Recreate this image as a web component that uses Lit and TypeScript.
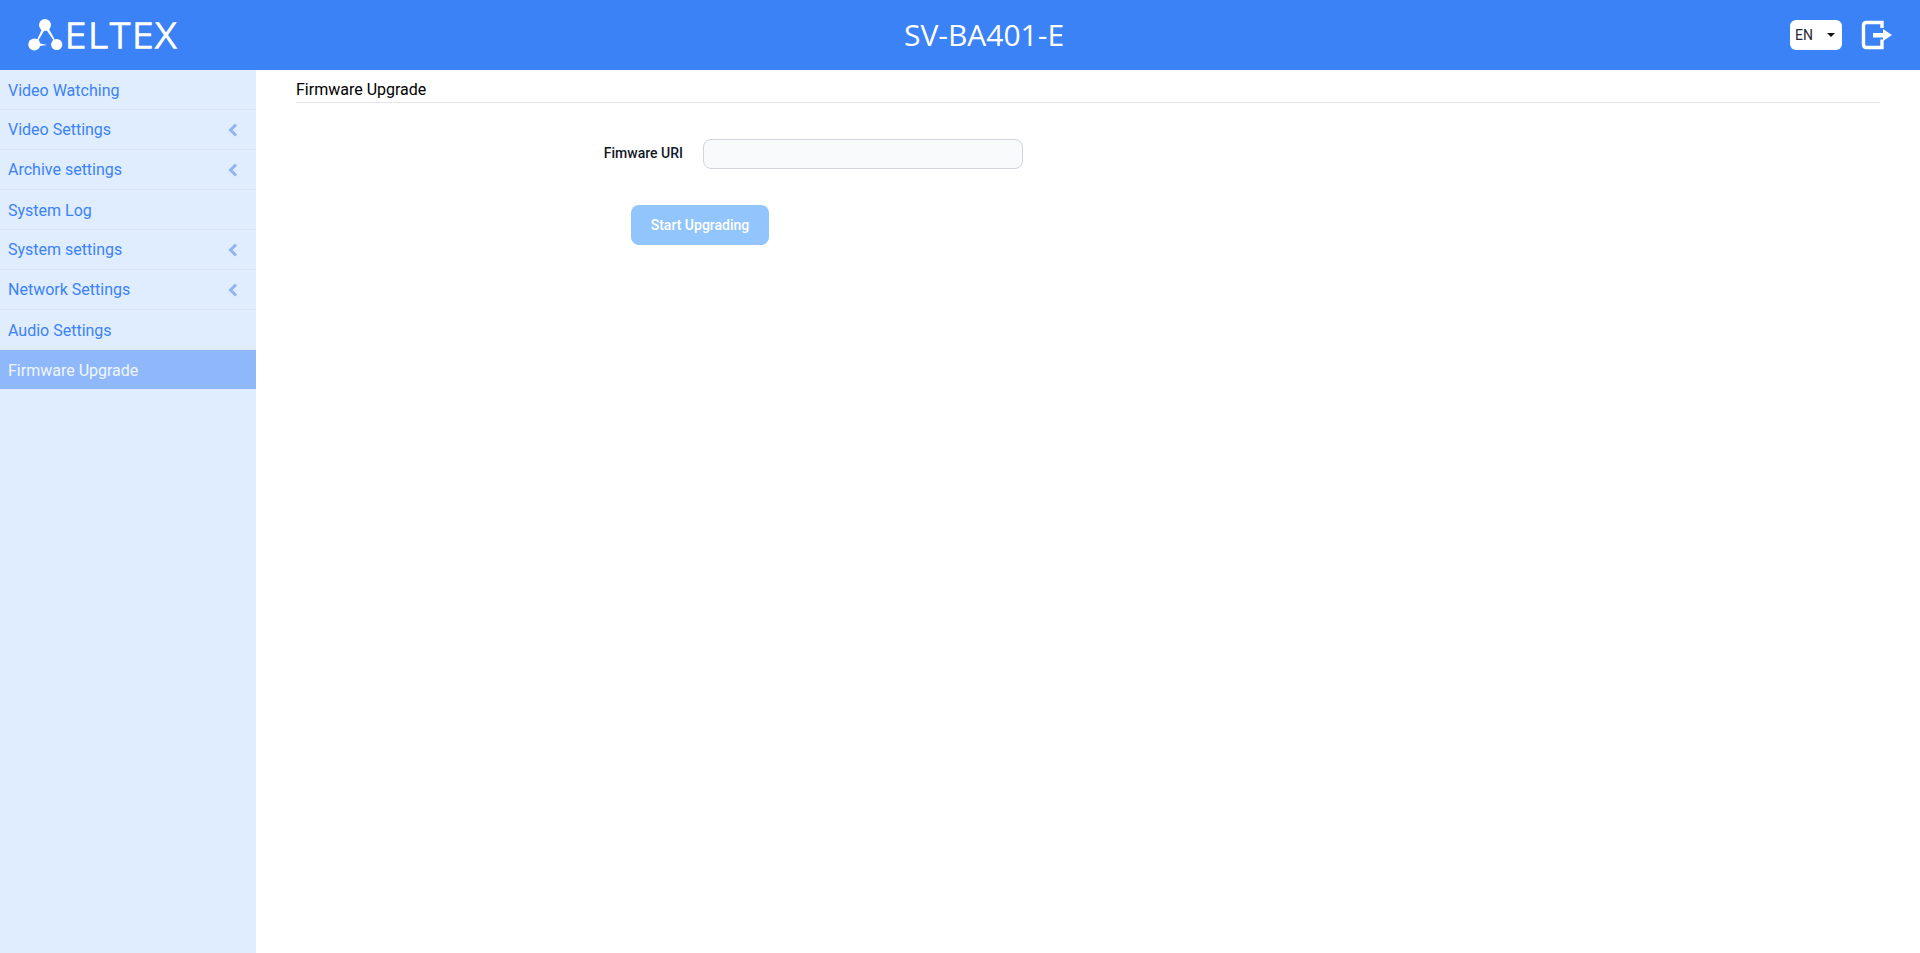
import { LitElement, html, css, svg } from "lit";
import { customElement } from "lit/decorators.js";

const items: [string, boolean, boolean][] = [
  ["Video Watching", false, false],
  ["Video Settings", true, false],
  ["Archive settings", true, false],
  ["System Log", false, false],
  ["System settings", true, false],
  ["Network Settings", true, false],
  ["Audio Settings", false, false],
  ["Firmware Upgrade", false, true],
];

@customElement("app-root")
export class AppRoot extends LitElement {
  static styles = css`
    :host { display: flex; flex-direction: column; height: 953px; font-family: Roboto, "Liberation Sans", sans-serif; background: #fff; overflow: hidden; }
    .header { flex: none; height: 70px; background: #3b82f6; display: grid; grid-template-columns: 1fr auto 1fr; align-items: center; padding: 0 28px; color: #fff; box-sizing: border-box; }
    .logo { display: flex; align-items: center; gap: 1px; }
    .logo-text { display: inline-block; font-family: "Open Sans", sans-serif; font-size: 35px; font-weight: 300; line-height: 40px; letter-spacing: 2px; color: #fff; -webkit-text-stroke: 1.3px #fff; transform: scaleX(1.09); transform-origin: left center; }
    .title { font-family: "Open Sans", sans-serif; font-size: 30px; line-height: 40px; margin-left: 48px; }
    .right { display: flex; justify-content: flex-end; align-items: center; gap: 19px; }
    .lang { width: 52px; height: 30px; background: #fff; border-radius: 6px; box-sizing: border-box; padding-left: 5px; display: flex; align-items: center; font-size: 14px; color: #1f2937; position: relative; }
    .caret { position: absolute; left: 37px; top: 13px; width: 0; height: 0; border-left: 4px solid transparent; border-right: 4px solid transparent; border-top: 4px solid #111; }
    .body { flex: 1; display: flex; min-height: 0; }
    .side { width: 256px; flex: none; background: #e0edff; }
    .item { height: 40px; box-sizing: border-box; border-bottom: 1px solid #dbe5f3; padding: 0 8px; display: flex; align-items: center; justify-content: space-between; font-size: 16px; color: #3b82f6; }
    .item.plain { padding-top: 2px; }
    .item.active { background: #8fb8fb; color: #f0f6ff; border-bottom: none; height: 39px; }
    .chev { margin-right: 10px; display: block; }
    .main { flex: 1; padding: 10px 40px 0; box-sizing: border-box; }
    .h { height: 23px; box-sizing: border-box; border-bottom: 1px solid #e5e7eb; font-size: 16px; line-height: 19px; color: #000; }
    .row { margin-top: 36px; display: flex; align-items: center; }
    .label { width: 387px; text-align: right; font-size: 14px; font-weight: 500; color: #111827; margin: 0 20px 2px 0; }
    .input { width: 320px; height: 30px; box-sizing: border-box; background: #f9fafb; border: 1px solid #d1d5db; border-radius: 8px; padding: 0; display: block; }
    .btn { display: block; margin: 36px 0 0 335px; width: 138px; height: 40px; border: none; border-radius: 8px; background: #93c5fd; color: #fff; font: 500 14px Roboto, sans-serif; padding: 0; }
  `;

  private mark() {
    return svg`<svg width="36" height="34" viewBox="0 0 36 34">
      <g fill="#fff">
        <path d="M14 11 L16.5 12 L10 23 L9 22 Z"/>
        <path d="M18.5 12 L21 11 L27 22 L26 23 Z"/>
        <path d="M8 24.5 L19 27 L8 28.5 Z"/>
        <circle cx="17" cy="7" r="6"/><circle cx="6.3" cy="26.5" r="6"/><circle cx="28.7" cy="26.5" r="5.6"/>
      </g>
    </svg>`;
  }

  render() {
    return html`
      <div class="header">
        <div class="logo">${this.mark()}<span class="logo-text">ELTEX</span></div>
        <div class="title">SV-BA401-E</div>
        <div class="right">
          <div class="lang">EN<span class="caret"></span></div>
          <svg width="31" height="30" viewBox="0 0 31 30" fill="none">
            <path d="M21 8 V2.5 H5 A3 3 0 0 0 2.5 5.5 V24.5 A3 3 0 0 0 5 27.5 H21 V19.5" stroke="#fff" stroke-width="3.4"/>
            <path d="M12 13 H22 V9 L31 15 L22 21 V17.5 H12 Z" fill="#fff"/>
          </svg>
        </div>
      </div>
      <div class="body">
        <nav class="side">
          ${items.map(([t, c, a]) => html`<div class="item ${a ? "active" : ""} ${c ? "" : "plain"}"><span>${t}</span>${c ? html`<svg class="chev" width="10" height="14" viewBox="0 0 10 14"><path d="M8 1.5 L2.5 7 L8 12.5" stroke="#8fb4fa" stroke-width="3" fill="none"/></svg>` : ""}</div>`)}
        </nav>
        <main class="main">
          <div class="h">Firmware Upgrade</div>
          <div class="row"><span class="label">Fimware URI</span><input class="input" /></div>
          <button class="btn">Start Upgrading</button>
        </main>
      </div>
    `;
  }
}
